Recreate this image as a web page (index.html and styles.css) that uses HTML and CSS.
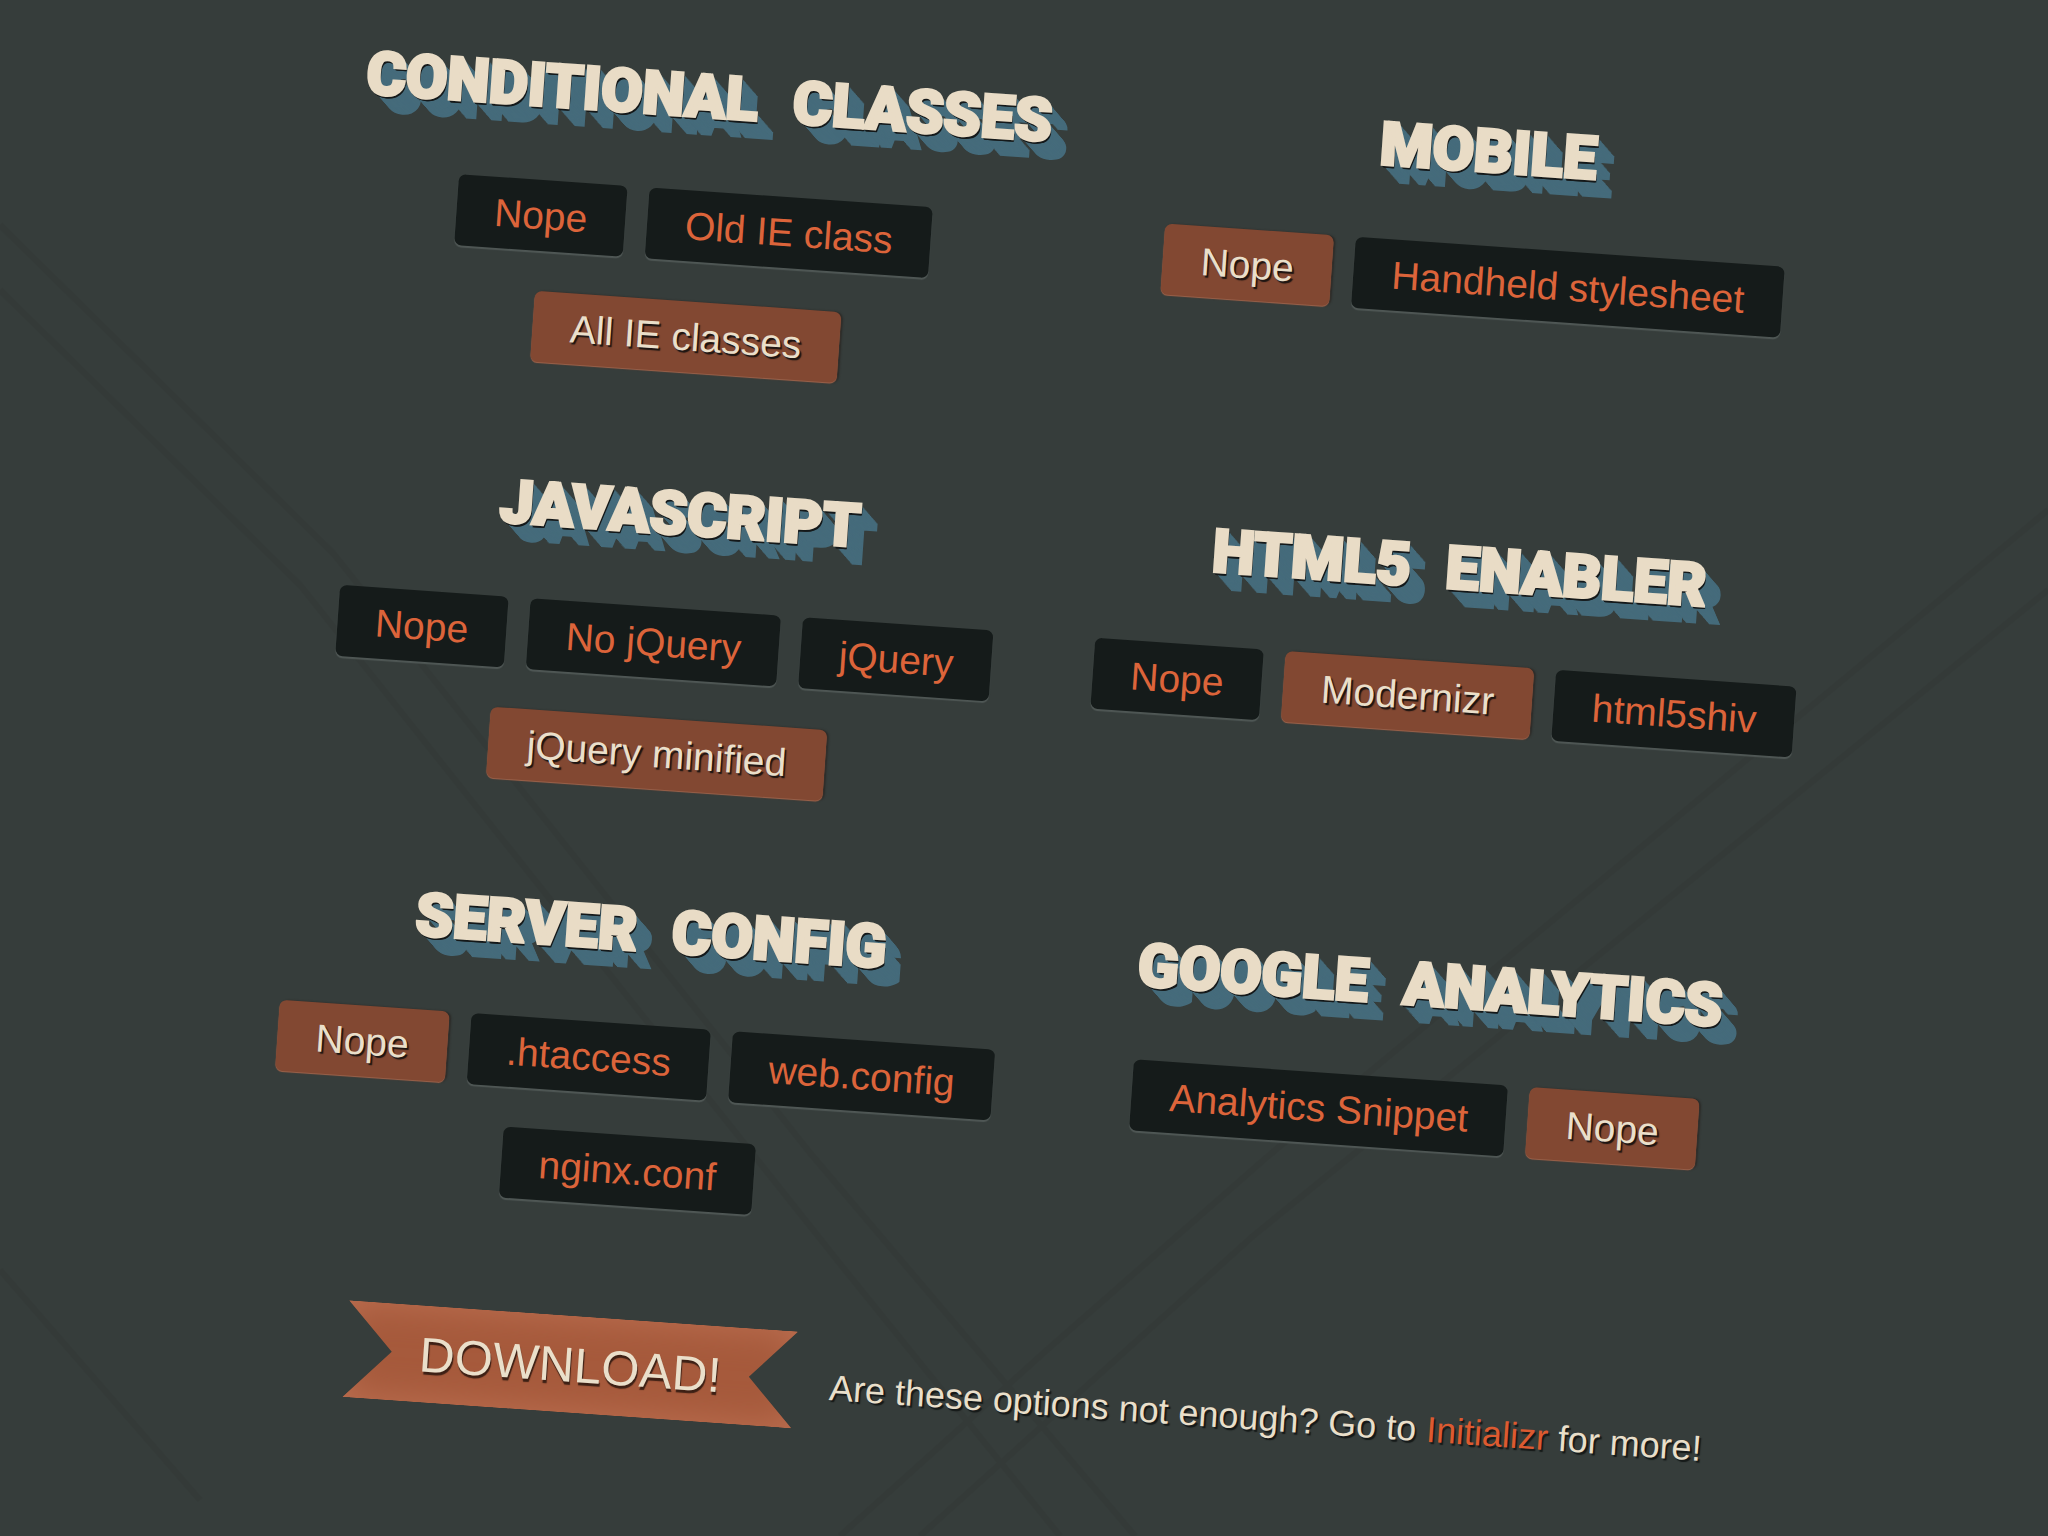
FILE: index.html
```html
<!DOCTYPE html>
<html lang="en">
<head>
  <meta charset="UTF-8">
  <title>Build your boilerplate</title>
  <link rel="stylesheet" href="styles.css">
</head>
<body>
  <svg class="rays" viewBox="0 0 2048 1536" preserveAspectRatio="none" aria-hidden="true">
    <path d="M0 225L333 553L811 1154L1135 1536M0 290L300 585L845 1270L1060 1536"/>
    <path d="M2048 510L1267 1157L1048 1349L840 1536M2048 590L1253 1236L920 1536M0 1270L200 1500"/>
  </svg>

  <form id="builder" class="builder">
    <div class="groups">
      <section class="group">
        <h2>Conditional <span>Classes</span></h2>
        <div class="options">
          <label class="option"><input type="radio" name="ie" value="none"><span>Nope</span></label>
          <label class="option"><input type="radio" name="ie" value="old"><span>Old IE class</span></label>
          <label class="option"><input type="radio" name="ie" value="all" checked><span>All IE classes</span></label>
        </div>
      </section>

      <section class="group">
        <h2>Mobile</h2>
        <div class="options">
          <label class="option"><input type="radio" name="mobile" value="none" checked><span>Nope</span></label>
          <label class="option"><input type="radio" name="mobile" value="handheld"><span>Handheld stylesheet</span></label>
        </div>
      </section>

      <section class="group">
        <h2>Javascript</h2>
        <div class="options">
          <label class="option"><input type="radio" name="js" value="none"><span>Nope</span></label>
          <label class="option"><input type="radio" name="js" value="nojquery"><span>No jQuery</span></label>
          <label class="option"><input type="radio" name="js" value="jquery"><span>jQuery</span></label>
          <label class="option"><input type="radio" name="js" value="jquerymin" checked><span>jQuery minified</span></label>
        </div>
      </section>

      <section class="group">
        <h2>HTML5 <span>Enabler</span></h2>
        <div class="options">
          <label class="option"><input type="radio" name="html5" value="none"><span>Nope</span></label>
          <label class="option"><input type="radio" name="html5" value="modernizr" checked><span>Modernizr</span></label>
          <label class="option"><input type="radio" name="html5" value="shiv"><span>html5shiv</span></label>
        </div>
      </section>

      <section class="group">
        <h2>Server <span>Config</span></h2>
        <div class="options">
          <label class="option"><input type="radio" name="server" value="none" checked><span>Nope</span></label>
          <label class="option"><input type="radio" name="server" value="htaccess"><span>.htaccess</span></label>
          <label class="option"><input type="radio" name="server" value="webconfig"><span>web.config</span></label>
          <label class="option"><input type="radio" name="server" value="nginx"><span>nginx.conf</span></label>
        </div>
      </section>

      <section class="group">
        <h2>Google <span>Analytics</span></h2>
        <div class="options">
          <label class="option"><input type="radio" name="analytics" value="snippet"><span>Analytics Snippet</span></label>
          <label class="option"><input type="radio" name="analytics" value="none" checked><span>Nope</span></label>
        </div>
      </section>
    </div>

    <div class="actions">
      <button type="submit" class="download">DOWNLOAD!</button>
      <p>Are these options not enough? Go to <a href="#initializr">Initializr</a> for more!</p>
    </div>
  </form>
</body>
</html>
```
FILE: styles.css
```css
* {
  box-sizing: border-box;
}
html {
  height: 100%;
  overflow: hidden;
}
body {
  margin: 0;
  min-height: 100%;
  background: #363d3b;
  color: #e9dfca;
  font-family: "Liberation Sans", Arial, sans-serif;
  overflow: hidden;
}

/* faint crossing rays behind everything */
.rays {
  position: absolute;
  top: 0;
  left: 0;
  width: 100%;
  height: 100%;
  fill: none;
  stroke: #30312f;
  stroke-width: 6;
  opacity: 0.2;
}

/* the whole form is tilted */
.builder {
  position: relative;
  min-height: 100vh;
  padding: 87px 220px 0 266px;
  transform: rotate(4deg);
}
.groups {
  display: grid;
  grid-template-columns: 1fr 1fr;
  grid-auto-rows: minmax(418px, auto);
}
.group {
  text-align: center;
}

h2 {
  margin: 0 0 60px;
  padding-left: 14px;
  font-family: Roboto, "Liberation Sans", sans-serif;
  font-size: 60px;
  font-weight: 900;
  line-height: 68px;
  text-transform: uppercase;
  color: #e9dcc6;
  -webkit-text-stroke: 3px #e9dcc6;
  text-shadow:
    0 2px #15191a, 1px 3px #15191a, 2px 3px #15191a,
    3px 3px #456b7b, 4px 4px #456b7b, 5px 5px #456b7b, 6px 6px #456b7b,
    7px 7px #456b7b, 8px 8px #456b7b, 9px 9px #456b7b, 10px 10px #456b7b,
    11px 11px #456b7b, 12px 12px #456b7b, 13px 13px #456b7b, 14px 14px #456b7b,
    15px 15px #456b7b, 16px 16px #456b7b, 17px 17px #456b7b, 18px 18px #456b7b;
}
h2 span {
  margin-left: 20px;
}

.options {
  display: flex;
  flex-wrap: wrap;
  justify-content: center;
  gap: 40px 22px;
}
.option {
  position: relative;
  cursor: pointer;
}
.option input {
  position: absolute;
  inset: 0;
  width: 100%;
  height: 100%;
  margin: 0;
  opacity: 0;
}
.option span {
  display: block;
  padding: 0 38px;
  border-radius: 7px;
  background: #151b1a;
  box-shadow: 0 2px 1px #505856;
  color: #dc643a;
  font-size: 39px;
  line-height: 71px;
}
.option input:checked + span {
  background: #824832;
  box-shadow: 0 1px 1px #a0644c, 2px 0 2px #2b2a27;
  color: #eadfca;
  text-shadow: 2px 2px 1px #1d1512;
}

.actions {
  display: flex;
  align-items: baseline;
  gap: 35px;
  margin-top: 5px;
  padding-left: 122px;
}
.download {
  width: 450px;
  height: 97px;
  padding: 0;
  border: 0;
  background: #a65a3c;
  box-shadow: inset 0 0 36px #bd7052;
  clip-path: polygon(0 0, 100% 0, calc(100% - 46px) 50%, 100% 100%, 0 100%, 46px 50%);
  color: #eadfca;
  font-family: inherit;
  font-size: 49px;
  text-shadow: 1px 3px 1px #3d2015;
}
.actions p {
  margin: 0;
  font-size: 36px;
  white-space: nowrap;
  text-shadow: 2px 2px 1px #151918;
}
.actions a {
  color: #dc5a30;
  text-decoration: none;
}
```
